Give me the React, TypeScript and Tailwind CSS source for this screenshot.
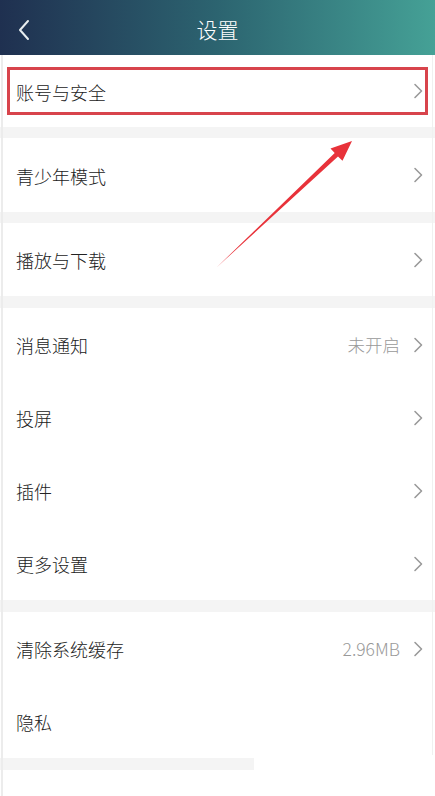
import React from "react";

const Chevron = () => (
  <svg width="10" height="16" viewBox="0 0 10 16" className="shrink-0">
    <path d="M2 1.5 L8.5 8 L2 14.5" fill="none" stroke="#9a9a9a" strokeWidth="1.6" strokeLinecap="round" strokeLinejoin="round" />
  </svg>
);

type RowProps = { label: string; value?: string; h?: string; boxed?: boolean; noChevron?: boolean };

const Row = ({ label, value, h = "h-[73px]", boxed, noChevron }: RowProps) => (
  <div className={`${h} bg-white flex items-center px-[7px]`}>
    <div
      className={`flex-1 flex items-center h-[48px] pl-[6px] pr-[2px] ${boxed ? "border-[3px] border-[#d8444c]" : "border-[3px] border-transparent"}`}
    >
      <span className="flex-1 text-[18px] font-light text-[#222222] pt-[2px]">{label}</span>
      {value && <span className="text-[17.5px] font-light text-[#999999] mr-[13px] pt-[2px]">{value}</span>}
      {!noChevron && <Chevron />}
    </div>
  </div>
);

const Gap = () => <div className="h-[11px] bg-[#f4f4f4]" />;

export default function App() {
  return (
    <div
      className="relative w-[435px] h-[796px] overflow-hidden bg-white"
      style={{ fontFamily: '"Noto Sans CJK SC", "Noto Sans", sans-serif' }}
    >
      <div className="h-[55px] bg-gradient-to-r from-[#1f3050] via-[#2c6470] to-[#45a196] flex items-center relative">
        <svg width="14" height="22" viewBox="0 0 14 22" className="absolute left-[17px] top-[19px]">
          <path d="M11 2 L3 11 L11 20" fill="none" stroke="#e8eef0" strokeWidth="2" strokeLinecap="round" strokeLinejoin="round" />
        </svg>
        <div className="flex-1 text-center text-white text-[21px] font-light pt-[4px]">设置</div>
      </div>
      <Row label="账号与安全" h="h-[72px]" boxed />
      <Gap />
      <Row label="青少年模式" h="h-[74px]" />
      <Gap />
      <Row label="播放与下载" />
      <div className="h-[12px] bg-[#f4f4f4]" />
      <Row label="消息通知" value="未开启" />
      <Row label="投屏" />
      <Row label="插件" />
      <Row label="更多设置" />
      <div className="h-[12px] bg-[#f4f4f4]" />
      <Row label="清除系统缓存" value="2.96MB" />
      <Row label="隐私" noChevron />
      <div className="h-[12px] w-[254px] bg-[#f4f4f4]" />
      <div className="h-[30px] bg-white" />

      <div className="absolute left-[1px] top-[55px] bottom-0 w-[2px] bg-[#ececec]" />
      <div className="absolute right-[2px] top-[55px] h-[700px] w-[1px] bg-[#f0f0f0]" />

      <svg className="absolute left-0 top-0 pointer-events-none" width="435" height="796" viewBox="0 0 435 796">
        <polygon
          points="216,268 338,156.5 342.5,160.8 352,141 330.5,148.5 334.7,152.9"
          fill="#e8323a"
        />
      </svg>
    </div>
  );
}
